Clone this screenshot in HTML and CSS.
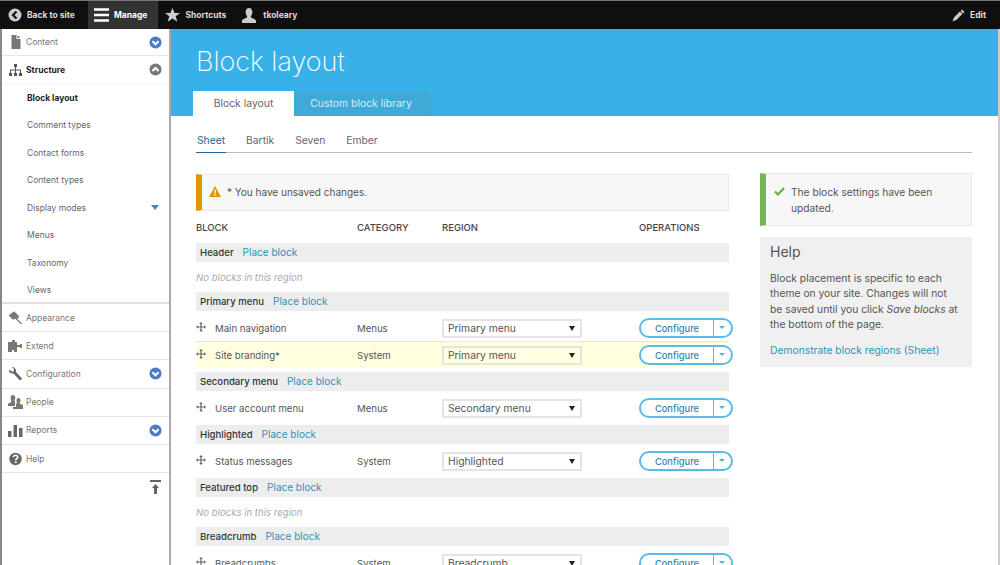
FILE: index.html
```html
<!DOCTYPE html>
<html lang="en">
<head>
  <meta charset="UTF-8" />
  <title>Block layout</title>
  <link rel="stylesheet" href="styles.css">
</head>
<body>
  <svg class="defs" width="0" height="0">
    <symbol id="down" viewBox="0 0 14 14"><circle cx="7" cy="7" r="6.5" fill="#4a7cc9"/><path d="M3.7 5.6 7 8.9l3.3-3.3" fill="none" stroke="#fff" stroke-width="2.2"/></symbol>
    <symbol id="up" viewBox="0 0 14 14"><circle cx="7" cy="7" r="6.5" fill="#787878"/><path d="M3.7 8.6 7 5.3l3.3 3.3" fill="none" stroke="#fff" stroke-width="2.2"/></symbol>
    <symbol id="move" viewBox="0 0 10 10"><path d="M5 0 6.8 2H5.6v2.4H8V3.200L10 5 8 6.800V5.600H5.600V8H6.800L5 10 3.200 8H4.400V5.600H2V6.800L0 5 2 3.200V4.400H4.400V2H3.200Z" fill="#666"/></symbol>
  </svg>

  <header class="toolbar">
    <a class="bar-item back"><svg width="14" height="14" viewBox="0 0 14 14"><circle cx="7" cy="7" r="6.500" fill="#ccc"/><path d="M8.500 3.500 5 7l3.500 3.500" fill="none" stroke="#111" stroke-width="2.200"/></svg>Back to site</a>
    <a class="bar-item active"><svg width="15" height="14" viewBox="0 0 15 14"><path d="M0 1.500h15M0 7h15M0 12.500h15" stroke="#fff" stroke-width="2.400"/></svg>Manage</a>
    <a class="bar-item"><svg width="15" height="14" viewBox="0 0 15 14"><path d="M7.500 0l2.100 5h5.400l-4.300 3.300 1.600 5.500-4.800-3.200-4.800 3.200 1.600-5.500L0 5h5.400z" fill="#ccc"/></svg>Shortcuts</a>
    <a class="bar-item user"><svg width="14" height="15" viewBox="0 0 14 15"><path d="M7 0c2.200 0 3.400 1.700 3.400 4S9 8 8.800 9c0 1 4.200 1.800 5.200 3.400V15H0v-2.600C1 10.800 5.200 10 5.200 9 5 8 3.600 6.300 3.600 4S4.800 0 7 0z" fill="#ccc"/></svg>tkoleary</a>
    <a class="bar-item edit"><svg width="13" height="13" viewBox="0 0 13 13"><path d="M10 .5l2.500 2.500-1.400 1.400-2.500-2.500zM7.900 2.600l2.500 2.500-6 6L1.400 12 .4 12.600 1.900 8.600z" fill="#ccc"/></svg>Edit</a>
  </header>

  <div class="page">
    <nav class="sidebar">
      <a class="menu-item"><svg class="menu-icon" width="14" height="14" viewBox="0 0 14 14"><path d="M3 0h5v4h4v10H3zM9 0l3 3H9z" fill="#777"/></svg>Content<svg class="toggle"><use href="#down"/></svg></a>
      <a class="menu-item open"><svg class="menu-icon" width="15" height="14" viewBox="0 0 15 14"><path d="M6 1h3v3H8v2.500h5V10h-1V7.500H8V10H7V7.500H3V10H2V6.500h5V4H6zM1 10h3v3H1zM6 10h3v3H6zM11 10h3v3h-3z" fill="#555"/></svg>Structure<svg class="toggle"><use href="#up"/></svg></a>
      <div class="submenu">
        <a class="sub-item current">Block layout</a>
        <a class="sub-item">Comment types</a>
        <a class="sub-item">Contact forms</a>
        <a class="sub-item">Content types</a>
        <a class="sub-item">Display modes<span class="sub-arrow"></span></a>
        <a class="sub-item">Menus</a>
        <a class="sub-item">Taxonomy</a>
        <a class="sub-item">Views</a>
      </div>
      <a class="menu-item"><svg class="menu-icon" width="14" height="14" viewBox="0 0 14 14"><path d="M5.500 1 10 5.500 8 8 7 7l-2.500 1L1 4.500zM8.500 8.500 13 13" fill="#777" stroke="#777" stroke-width="1.200"/></svg>Appearance</a>
      <a class="menu-item"><svg class="menu-icon" width="15" height="14" viewBox="0 0 15 14"><path d="M4 1h3v2h2v3h3V5h2v4h-2V8H9v5H6v-2H4v2H0V3h4z" fill="#777"/></svg>Extend</a>
      <a class="menu-item"><svg class="menu-icon" width="14" height="14" viewBox="0 0 14 14"><path d="M3.500 0 5.500 2v1.500L4 5 2 3.500 .5 2.500C0 5 2 7 5 6.500L11 13h1.500l1-1.500L7.500 5C8 2 6 0 3.500 0z" fill="#666"/></svg>Configuration<svg class="toggle"><use href="#down"/></svg></a>
      <a class="menu-item"><svg class="menu-icon" width="15" height="14" viewBox="0 0 15 14"><path d="M5 0c1.500 0 2.300 1 2.300 2.500S6.500 5 6.300 6H7v5H0V9c.8-1 2.900-1.600 3.500-2.500C2.700 5 2.700 4 2.700 2.500S3.500 0 5 0zM10.500 3c1.300 0 2 .9 2 2.200s-.7 2.300-1 3c.5.700 2.500 1 3.500 2V14H5v-2h3V8.500h1.200c-.4-1-.7-2-.7-3.300C8.500 3.900 9.200 3 10.500 3z" fill="#777"/></svg>People</a>
      <a class="menu-item"><svg class="menu-icon" width="15" height="14" viewBox="0 0 15 14"><path d="M0 8h3.500v6H0zM5.500 2H9v12H5.500zM11 5h3.500v9H11z" fill="#666"/></svg>Reports<svg class="toggle"><use href="#down"/></svg></a>
      <a class="menu-item"><svg class="menu-icon" width="14" height="14" viewBox="0 0 14 14"><circle cx="7" cy="7" r="6.200" fill="#666"/><path d="M4.800 5.200C5 3.800 6 3.200 7.200 3.300c1.300.1 2.200 1 2 2.200C9 6.700 7.200 6.800 7.200 8.300" fill="none" stroke="#fff" stroke-width="1.600"/><rect x="6.300" y="9.300" width="1.800" height="1.800" fill="#fff"/></svg>Help</a>
      <div class="collapse"><svg width="11" height="14" viewBox="0 0 11 14"><path d="M0 0h11v2H0zM5.500 4 9 8H7v6H4V8H2z" fill="#666"/></svg></div>
    </nav>

    <div class="content">
      <div class="banner">
        <h1 class="page-title">Block layout</h1>
        <div class="tabs">
          <a class="tab selected">Block layout</a>
          <a class="tab">Custom block library</a>
        </div>
      </div>

      <div class="body-area">
        <div class="subtabs">
          <a class="subtab selected">Sheet</a>
          <a class="subtab">Bartik</a>
          <a class="subtab">Seven</a>
          <a class="subtab">Ember</a>
        </div>

        <div class="columns">
          <main class="layout-col">
            <div class="message warning">
              <svg width="12" height="11" viewBox="0 0 12 11"><path d="M6 0l6 11H0z" fill="#e29700"/><path d="M6 3.500v4M6 8.300v1.400" stroke="#fff" stroke-width="1.300"/></svg>
              <span>* You have unsaved changes.</span>
            </div>

            <div class="grid-row head">
              <span>BLOCK</span><span>CATEGORY</span><span>REGION</span><span>OPERATIONS</span>
            </div>

            <div class="region"><b>Header</b><a class="link">Place block</a></div>
            <div class="empty">No blocks in this region</div>

            <div class="region"><b>Primary menu</b><a class="link">Place block</a></div>
            <div class="grid-row block first">
              <span class="block-name"><svg class="grip"><use href="#move"/></svg>Main navigation</span><span>Menus</span>
              <span class="fake-select">Primary menu</span>
              <span class="dropbutton"><span class="drop-main">Configure</span><span class="drop-arrow"></span></span>
            </div>
            <div class="grid-row block changed">
              <span class="block-name"><svg class="grip"><use href="#move"/></svg>Site branding*</span><span>System</span>
              <span class="fake-select">Primary menu</span>
              <span class="dropbutton"><span class="drop-main">Configure</span><span class="drop-arrow"></span></span>
            </div>

            <div class="region"><b>Secondary menu</b><a class="link">Place block</a></div>
            <div class="grid-row block">
              <span class="block-name"><svg class="grip"><use href="#move"/></svg>User account menu</span><span>Menus</span>
              <span class="fake-select">Secondary menu</span>
              <span class="dropbutton"><span class="drop-main">Configure</span><span class="drop-arrow"></span></span>
            </div>

            <div class="region"><b>Highlighted</b><a class="link">Place block</a></div>
            <div class="grid-row block">
              <span class="block-name"><svg class="grip"><use href="#move"/></svg>Status messages</span><span>System</span>
              <span class="fake-select">Highlighted</span>
              <span class="dropbutton"><span class="drop-main">Configure</span><span class="drop-arrow"></span></span>
            </div>

            <div class="region"><b>Featured top</b><a class="link">Place block</a></div>
            <div class="empty">No blocks in this region</div>

            <div class="region"><b>Breadcrumb</b><a class="link">Place block</a></div>
            <div class="grid-row block">
              <span class="block-name"><svg class="grip"><use href="#move"/></svg>Breadcrumbs</span><span>System</span>
              <span class="fake-select">Breadcrumb</span>
              <span class="dropbutton"><span class="drop-main">Configure</span><span class="drop-arrow"></span></span>
            </div>
          </main>

          <aside class="side-col">
            <div class="message status">
              <svg width="11" height="9" viewBox="0 0 11 9"><path d="M1 4.500 4 7.500 10 1" fill="none" stroke="#5fae3e" stroke-width="2"/></svg>
              <span>The block settings have been updated.</span>
            </div>
            <div class="help">
              <h2>Help</h2>
              <p>Block placement is specific to each theme on your site. Changes will not be saved until you click <em>Save blocks</em> at the bottom of the page.</p>
              <a class="link">Demonstrate block regions (Sheet)</a>
            </div>
          </aside>
        </div>
      </div>
    </div>
  </div>
</body>
</html>
```

FILE: styles.css
```css
html, body {
  margin: 0;
  height: 565px;
  overflow: hidden;
}

body {
  font-family: "Inter", "Liberation Sans", sans-serif;
  font-size: 9.6px;
  color: #555;
  background: #fff;
}

.defs {
  display: block;
  height: 0;
}

.toolbar {
  display: flex;
  height: 28px;
  background: #0f0f0f;
  border-top: 1px solid #777;
  color: #ddd;
  font-size: 8.500px;
  font-weight: 700;
}

.bar-item {
  display: flex;
  align-items: center;
  gap: 5px;
  padding: 0 8px 0 7px;
}

.bar-item.back {
  padding: 0 13px 0 8px;
}

.bar-item.active {
  background: #333;
  color: #fff;
  padding: 0 11px 0 6px;
}

.bar-item.user {
  gap: 7px;
  margin-left: 1px;
}

.bar-item.edit {
  margin-left: auto;
  padding-right: 14px;
}

.page {
  display: flex;
  height: 536px;
  border-left: 1px solid #888;
  border-right: 2px solid #ccc;
}

.sidebar {
  width: 167px;
  flex: none;
  background: #fff;
  border-right: 2px solid #aaa;
  border-left: 1px solid #888;
  font-size: 8.500px;
}

.menu-item {
  display: flex;
  align-items: center;
  height: 27.200px;
  padding: 0 7px 0 6px;
  border-bottom: 1px solid #e6e6e6;
  color: #777;
}

.menu-item:first-child {
  height: 26px;
}

.menu-item.open {
  height: 27px;
  border-bottom-color: #f4f4f4;
  color: #222;
  font-weight: 700;
}

.menu-icon {
  width: 15px;
  margin-right: 3px;
  flex: none;
}

.toggle {
  width: 13px;
  height: 13px;
  margin-left: auto;
}

.submenu {
  display: flex;
  flex-direction: column;
  box-sizing: border-box;
  height: 220px;
  border-bottom: 2px solid #e0e0e0;
}

.sub-item {
  display: flex;
  align-items: center;
  height: 27.500px;
  flex: none;
  padding: 0 10px 0 25px;
  color: #666;
}

.sub-item.current {
  color: #222;
  font-weight: 700;
}

.sub-arrow {
  margin-left: auto;
  border: 4px solid transparent;
  border-top: 5px solid #4a7cc9;
  border-bottom: 0;
}

.collapse {
  display: flex;
  justify-content: flex-end;
  padding: 7px 8px;
}

.content {
  flex: 1;
  min-width: 0;
}

.banner {
  height: 87px;
  padding-left: 22px;
  background: #38b1e8;
  display: flex;
  flex-direction: column;
  justify-content: flex-end;
}

.page-title {
  margin: 0 0 12px 3px;
  color: #fff;
  font-size: 27px;
  line-height: 34px;
  font-weight: 200;
}

.tabs {
  display: flex;
  height: 25px;
}

.tab {
  display: flex;
  align-items: center;
  justify-content: center;
  box-sizing: border-box;
  padding-right: 3px;
  background: #3fa9d8;
  color: #d3eefa;
  font-size: 10.400px;
  width: 137px;
}

.tab.selected {
  width: 101px;
  padding-right: 0;
  background: #fff;
  color: #666;
}

.body-area {
  padding: 0 26px 0 25px;
}

.subtabs {
  display: flex;
  gap: 19px;
  height: 36px;
  align-items: flex-end;
  border-bottom: 1px solid #bbb;
  font-size: 10.300px;
}

.subtab {
  padding: 0 1px 6px;
  color: #666;
}

.subtab.selected {
  color: #23668f;
  border-bottom: 1px solid #23668f;
  margin-bottom: -1px;
}

.columns {
  display: flex;
  justify-content: space-between;
  padding-top: 21px;
}

.layout-col {
  width: 533px;
}

.side-col {
  width: 212px;
}

.message {
  display: flex;
  gap: 6px;
  background: #f7f7f7;
  border: 1px solid #e8e8e8;
  line-height: 16px;
  font-size: 10px;
  box-sizing: border-box;
}

.message.warning {
  height: 37px;
  align-items: center;
  padding: 0 0 2px 7px;
  border-left: 6px solid #e29700;
}

.message.status {
  height: 53px;
  margin-top: -1px;
  padding: 10px 12px 0 8px;
  font-size: 10.200px;
  border-left: 6px solid #74b45a;
}

.message.status svg {
  flex: none;
  margin-top: 3px;
}

.grid-row {
  display: grid;
  grid-template-columns: 161px 85px 197px 1fr;
  align-items: center;
}

.grid-row.head {
  height: 32px;
  font-size: 9.500px;
  font-weight: 500;
  color: #444;
}

.region {
  display: flex;
  gap: 9px;
  align-items: center;
  height: 19px;
  padding: 0 0 1px 4px;
  box-sizing: border-box;
  background: #ededed;
}

.region b {
  font-weight: 500;
  color: #333;
}

.region .link {
  font-size: 10px;
}

.link {
  color: #2f93b8;
}

.empty {
  height: 30px;
  display: flex;
  align-items: center;
  box-sizing: border-box;
  color: #aaa;
  font-style: italic;
}

.grid-row.block {
  height: 34px;
  padding-top: 7px;
  padding-bottom: 8px;
  box-sizing: border-box;
}

.grid-row.block.first {
  height: 31px;
  padding-bottom: 4px;
  border-bottom: 1px solid #e4e4e4;
}

.grid-row.block.changed {
  height: 26px;
  padding: 3px 0;
  margin-bottom: 4px;
  background: #ffffe0;
}

.block-name {
  display: flex;
  align-items: center;
}

.grip {
  width: 10px;
  height: 10px;
  margin-right: 9px;
  flex: none;
  position: relative;
  top: -1px;
}

.fake-select {
  position: relative;
  box-sizing: border-box;
  width: 140px;
  height: 19px;
  line-height: 15px;
  padding-left: 4px;
  background: #fff;
  border: 2px solid #e4e4e4;
  color: #555;
  font-size: 10.300px;
}

.changed .fake-select {
  background: #ffffe0;
}

.fake-select::after {
  content: "";
  position: absolute;
  right: 5px;
  top: 5px;
  border: 3.500px solid transparent;
  border-top: 5px solid #222;
  border-bottom: 0;
}

.dropbutton {
  display: flex;
  width: 94px;
  height: 20px;
  box-sizing: border-box;
  background: #fff;
  border: 2px solid #5bbbe8;
  border-radius: 10px;
  color: #2f88ad;
  font-size: 9.300px;
  font-weight: 500;
}

.drop-main {
  flex: 1;
  display: flex;
  align-items: center;
  justify-content: center;
  border-right: 1px solid #5bbbe8;
}

.drop-arrow {
  width: 17px;
  position: relative;
}

.drop-arrow::after {
  content: "";
  position: absolute;
  left: 5px;
  top: 6px;
  border: 3px solid transparent;
  border-top: 3px solid #4bb3e6;
  border-bottom: 0;
}

.help {
  margin-top: 11px;
  height: 130px;
  box-sizing: border-box;
  padding: 6px 10px;
  background: #f0f0f0;
  font-size: 10.300px;
  line-height: 15.500px;
}

.help h2 {
  margin: 0 0 9.500px;
  font-size: 14px;
  line-height: 18px;
  font-weight: 400;
  color: #555;
}

.help p {
  margin: 0 0 10px;
  max-width: 188px;
}
```
